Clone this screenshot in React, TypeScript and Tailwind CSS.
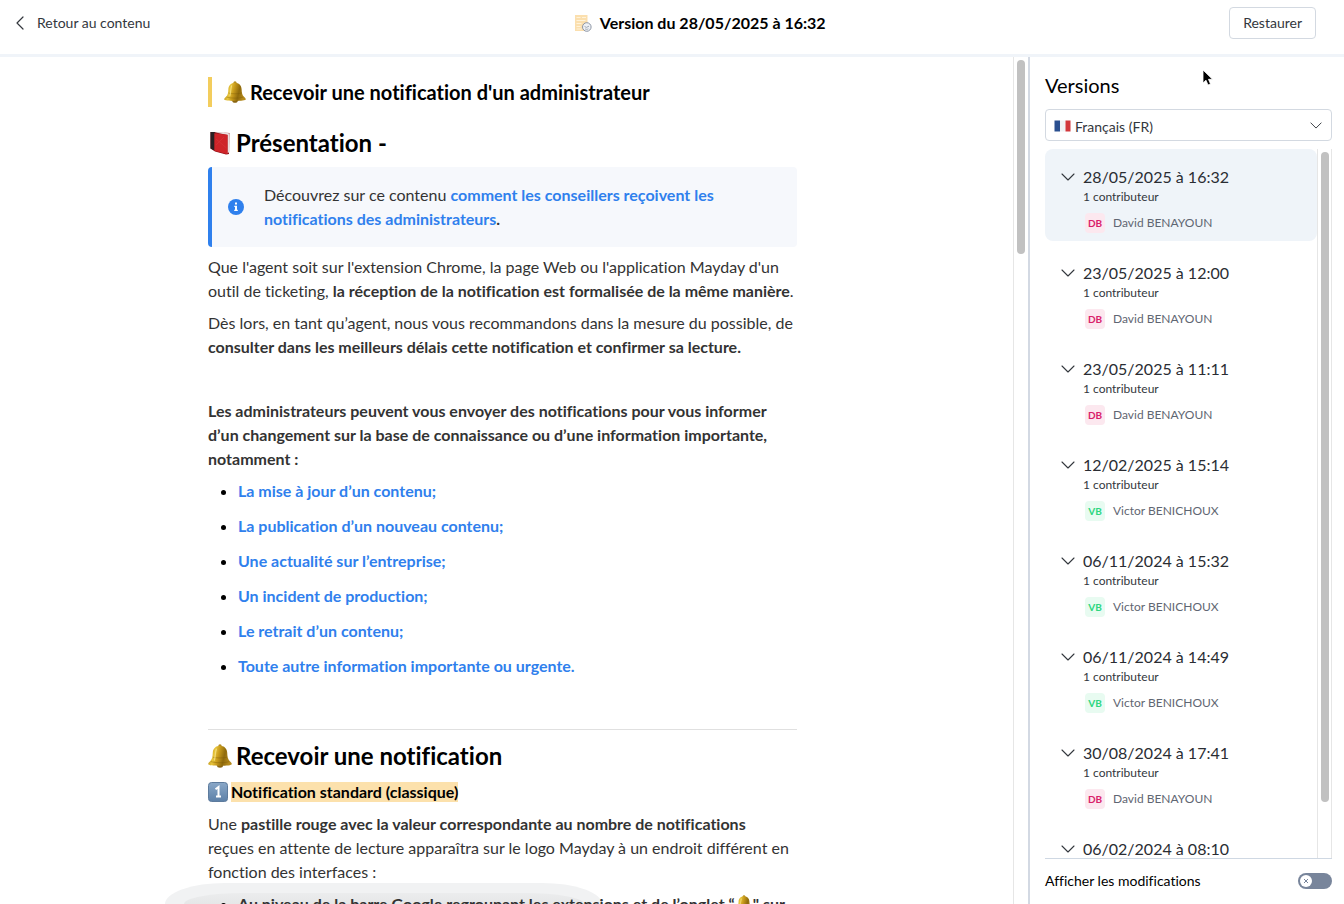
import { useState } from "react";

type Author = { initials: string; name: string; badge: string };

const DAVID: Author = { initials: "DB", name: "David BENAYOUN", badge: "bg-[#fce8ef] text-[#d9216b]" };
const VICTOR: Author = { initials: "VB", name: "Victor BENICHOUX", badge: "bg-[#e8fbf1] text-[#2ed680]" };

const versions = [
  { date: "28/05/2025 à 16:32", author: DAVID },
  { date: "23/05/2025 à 12:00", author: DAVID },
  { date: "23/05/2025 à 11:11", author: DAVID },
  { date: "12/02/2025 à 15:14", author: VICTOR },
  { date: "06/11/2024 à 15:32", author: VICTOR },
  { date: "06/11/2024 à 14:49", author: VICTOR },
  { date: "30/08/2024 à 17:41", author: DAVID },
  { date: "06/02/2024 à 08:10", author: DAVID },
];

const topics = [
  "La mise à jour d’un contenu;",
  "La publication d’un nouveau contenu;",
  "Une actualité sur l’entreprise;",
  "Un incident de production;",
  "Le retrait d’un contenu;",
  "Toute autre information importante ou urgente.",
];

function Bell({ className }: { className: string }) {
  return (
    <svg className={className} viewBox="0 0 24 24" aria-hidden="true">
      <defs>
        <linearGradient id="bell" x1="0" x2="1" y1="0" y2="0.2">
          <stop offset="0" stopColor="#a57a0c" />
          <stop offset="0.32" stopColor="#e8c53c" />
          <stop offset="0.5" stopColor="#c99c1c" />
          <stop offset="0.75" stopColor="#8f6a0c" />
          <stop offset="1" stopColor="#b58a1c" />
        </linearGradient>
      </defs>
      <circle cx="12" cy="2" r="1.7" fill="#b08a20" />
      <ellipse cx="12" cy="21.6" rx="3" ry="2.2" fill="#8a6614" />
      <path d="M12 1.800c-4.200 0-7 2.800-7.200 6.800-.2 4.400-.6 6.600-2.600 8.600C.9 18.500.2 19 .2 20c0 1.200 5.200 1.900 11.800 1.900s11.800-.7 11.800-1.900c0-1-.7-1.500-2-2.800-2-2-2.400-4.200-2.600-8.600-.2-4-3-6.800-7.200-6.800z" fill="url(#bell)" />
      <path d="M2.800 17.500c4 1.600 14.400 1.600 18.400 0M5 13.200c3 1 11 1 14 0" fill="none" stroke="#7c5a08" strokeWidth="0.700" opacity="0.600" />
      <path d="M8.300 5.200c-1.200 3.400-.8 7-1.900 11" fill="none" stroke="#f7e384" strokeWidth="1.300" strokeLinecap="round" opacity="0.800" />
    </svg>
  );
}

function Book() {
  return (
    <svg className="h-6 w-6 shrink-0" viewBox="0 0 24 24" aria-hidden="true">
      <path d="M2.500 1H7l14.500 1L21 23l-3 .5L7 20.500l-4.500-3z" fill="#8f1119" />
      <path d="M2.500 1h4l1 1.500V20l-5-2.500z" fill="#2a2023" />
      <path d="M6.500 1.200l9-.2 6 1.400v18.500l-2 1.300V4z" fill="#e9dede" />
      <path d="M6.300 2.200l13.200 1.500v19.500L6.300 19.800z" fill="#cf2429" />
      <path d="M8 8l10.500 9M8 14l8-8" stroke="#e0484b" strokeWidth="0.600" opacity="0.500" />
    </svg>
  );
}

function KeycapOne() {
  return (
    <svg className="h-5 w-5 shrink-0" viewBox="0 0 20 20" aria-hidden="true">
      <defs>
        <linearGradient id="keycap" x1="0" x2="0" y1="0" y2="1">
          <stop offset="0" stopColor="#8aa8c8" />
          <stop offset="1" stopColor="#5c80a8" />
        </linearGradient>
      </defs>
      <rect x="0.500" y="0.500" width="19" height="19" rx="3" fill="url(#keycap)" stroke="#5d7b9d" />
      <path d="M7.500 7.200L10.500 5v9.500M8 14.500h5" fill="none" stroke="#fff" strokeWidth="2" />
    </svg>
  );
}

function Chevron({ className }: { className: string }) {
  return (
    <svg className={className} viewBox="0 0 14 8" fill="none" stroke="#33373d" strokeWidth="1.100" strokeLinecap="round" strokeLinejoin="round" aria-hidden="true">
      <path d="M1 1l6 6 6-6" />
    </svg>
  );
}

function DocumentIcon() {
  return (
    <svg className="h-[18px] w-[18px]" viewBox="0 0 18 18" aria-hidden="true">
      <path d="M1 1h12.500v16H1z" fill="#fbdfae" />
      <path d="M2.500 3.500h4M8 3.500h4M2.500 6.500h9M2.500 9.500h5M2.500 12.500h4M2.500 15h5" stroke="#fff3da" />
      <circle cx="12.800" cy="13" r="4.300" fill="#eef1f5" stroke="#8d96a5" />
      <path d="M10.500 12.400l1.800 1 2.700-1.200M11 14.800c1 .7 2.400.7 3.400 0" fill="none" stroke="#8d96a5" strokeWidth="0.800" />
    </svg>
  );
}

function Header() {
  return (
    <header className="flex shrink-0 items-center justify-between border-b-[3px] border-[#f0f4f9] pt-[7px] pr-7 pb-[15px] pl-4">
      <button type="button" className="flex items-center gap-3 pr-5 text-sm text-[#33373d]">
        <svg className="h-[14px] w-[9px]" viewBox="0 0 9 14" fill="none" stroke="#33373d" strokeWidth="1.200" strokeLinecap="round" strokeLinejoin="round" aria-hidden="true">
          <path d="M7 1L1 7l6 6" />
        </svg>
        Retour au contenu
      </button>
      <h1 className="flex items-center gap-2 text-base font-bold text-black">
        <DocumentIcon />
        Version du 28/05/2025 à 16:32
      </h1>
      <button type="button" className="h-8 rounded border border-[#d3d9e1] px-[13px] text-sm text-[#33373d]">
        Restaurer
      </button>
    </header>
  );
}

function Article() {
  return (
    <article className="mx-auto w-full max-w-[589px] pt-5 text-base leading-6 text-[#333]">
      <h2 className="flex items-center gap-1 border-l-4 border-[#f3cd5d] pl-3 text-xl leading-[30px] font-bold text-black">
        <Bell className="h-[22px] w-[22px] shrink-0" />
        Recevoir une notification d'un administrateur
      </h2>

      <h2 className="mt-[18px] flex items-center gap-1 text-2xl leading-9 font-bold text-black">
        <Book />
        Présentation -
      </h2>

      <div className="mt-[6px] flex items-center gap-5 rounded-sm border-l-4 border-[#2f80ed] bg-[#f6f8fc] py-4 pr-12 pl-4">
        <svg className="h-4 w-4 shrink-0" viewBox="0 0 16 16" aria-hidden="true">
          <circle cx="8" cy="8" r="8" fill="#2f80ed" />
          <path d="M7 3.500h2v2H7zM6.300 6.800H9v4h.8V12H6.200v-1.200H7V8h-.7z" fill="#fff" />
        </svg>
        <p>
          Découvrez sur ce contenu{" "}
          <a href="#conseillers" className="font-bold text-[#2f80ed]">
            comment les conseillers reçoivent les notifications des administrateurs
          </a>
          <strong>.</strong>
        </p>
      </div>

      <p className="mt-2">
        Que l'agent soit sur l'extension Chrome, la page Web ou l'application Mayday d'un outil de ticketing,{" "}
        <strong>la réception de la notification est formalisée de la même manière</strong>.
      </p>
      <p className="mt-2">
        Dès lors, en tant qu’agent, nous vous recommandons dans la mesure du possible, de{" "}
        <strong>consulter dans les meilleurs délais cette notification et confirmer sa lecture.</strong>
      </p>
      <p className="mt-10 font-bold">
        Les administrateurs peuvent vous envoyer des notifications pour vous informer d’un changement sur la base de
        connaissance ou d’une information importante, notamment :
      </p>

      <ul className="mt-2 list-disc space-y-[11px] pl-[30px] marker:text-black">
        {topics.map((topic) => (
          <li key={topic}>
            <a href="#topic" className="font-bold text-[#2f80ed]">{topic}</a>
          </li>
        ))}
      </ul>

      <hr className="mt-[51px] border-[#e0e0e0]" />

      <h2 className="mt-2 flex items-center gap-1 text-2xl leading-9 font-bold text-black">
        <Bell className="h-6 w-6 shrink-0" />
        Recevoir une notification
      </h2>
      <h3 className="mt-2 flex items-center gap-[3px] font-bold text-black">
        <KeycapOne />
        <mark className="bg-[#fce1ac] leading-5 text-black">Notification standard (classique)</mark>
      </h3>
      <p className="mt-[10px]">
        Une <strong>pastille rouge avec la valeur correspondante au nombre de notifications</strong>
        <br />
        reçues en attente de lecture apparaîtra sur le logo Mayday à un endroit différent en fonction des interfaces :
      </p>
      <ul className="mt-2 list-disc pl-[30px] font-bold marker:text-black">
        <li>
          Au niveau de la barre Google regroupant les extensions et de l’onglet “
          <Bell className="inline h-[18px] w-[18px] align-text-bottom" />" sur
        </li>
      </ul>
    </article>
  );
}

function LanguageSelect() {
  return (
    <div className="relative mt-[9px]">
      <select
        aria-label="Langue"
        className="h-8 w-full appearance-none rounded border border-[#d3d9e1] bg-white pt-[3px] pl-[29px] text-sm text-[#33373d]"
      >
        <option>Français (FR)</option>
      </select>
      <svg className="pointer-events-none absolute top-[11px] left-[9px] h-3 w-[17px]" viewBox="0 0 17 12" aria-hidden="true">
        <path d="M.5.500h5.500v11H.500z" fill="#2a4f8f" />
        <path d="M6 .5h5.500v11H6z" fill="#f1f2f5" />
        <path d="M11.500.500h5v11h-5z" fill="#d2373c" />
      </svg>
      <Chevron className="pointer-events-none absolute top-[13px] right-[10px] h-[7px] w-3" />
    </div>
  );
}

function Sidebar() {
  const [selected, setSelected] = useState(0);
  const [showChanges, setShowChanges] = useState(false);

  return (
    <aside className="flex w-[316px] shrink-0 flex-col border-l-2 border-[#d3d9e3] pr-3 pl-[15px]">
      <h2 className="mt-[13px] text-xl leading-[30px] text-black">Versions</h2>
      <LanguageSelect />

      <div className="mt-2 flex min-h-0 flex-1 border-b border-[#cfd8e3]">
        <ul className="flex-1 space-y-1 overflow-hidden">
          {versions.map((version, index) => (
            <li key={version.date} className={`rounded-lg pt-4 pb-2 pl-4 ${index === selected ? "bg-[#eff4f9]" : ""}`}>
              <button type="button" onClick={() => setSelected(index)} className="flex items-center gap-2 text-base leading-6 text-[#2a2d33]">
                <Chevron className="h-2 w-[14px]" />
                {version.date}
              </button>
              <p className="pl-[22px] text-xs leading-4 text-[#33373d]">1 contributeur</p>
              <div className="mt-2 flex items-center gap-2 pl-6">
                <span className={`flex h-5 w-5 items-center justify-center rounded text-[10px] font-bold ${version.author.badge}`}>
                  {version.author.initials}
                </span>
                <span className="text-xs text-[#5f6672]">{version.author.name}</span>
              </div>
            </li>
          ))}
        </ul>
        <div className="flex w-[15px] justify-center border-x border-[#e6e6e6] pt-[3px]" aria-hidden="true">
          <div className="h-[92%] w-2 rounded-full bg-[#c1c1c1]" />
        </div>
      </div>

      <label className="flex h-[45px] items-center justify-between pb-[2px] text-sm text-black">
        Afficher les modifications
        <span className="relative flex h-4 w-[34px]">
          <input
            type="checkbox"
            role="switch"
            checked={showChanges}
            onChange={(e) => setShowChanges(e.target.checked)}
            className="h-4 w-[34px] appearance-none rounded-full bg-[#78859b] checked:bg-[#2f80ed]"
          />
          <svg className={`pointer-events-none absolute top-[2px] h-3 w-3 ${showChanges ? "right-[2px]" : "left-[2px]"}`} viewBox="0 0 12 12" aria-hidden="true">
            <circle cx="6" cy="6" r="6" fill="#fff" />
            <path d="M4 4l4 4M8 4L4 8" stroke="#78859b" />
          </svg>
        </span>
      </label>
    </aside>
  );
}

export default function App() {
  return (
    <div className="relative isolate flex h-screen flex-col overflow-hidden bg-white font-['Lato',sans-serif] [font-variant-ligatures:none]">
      <Header />
      <div className="flex min-h-0 flex-1">
        <main className="min-w-0 flex-1 overflow-hidden pr-2">
          <Article />
        </main>
        <div className="flex w-[15px] shrink-0 justify-center border-l border-[#e6e6e6] pt-[3px]" aria-hidden="true">
          <div className="h-[194px] w-2 rounded-full bg-[#c1c1c1]" />
        </div>
        <Sidebar />
      </div>

      {/* soft shade rising from the bottom edge, under the text */}
      <div className="absolute bottom-0 left-[165px] -z-10 h-[21px] w-[437px] overflow-hidden rounded-t-[60px_21px] bg-[#f1f2f3] pt-[10px]" aria-hidden="true">
        <div className="mx-auto h-5 w-[400px] rounded-t-[60px_11px] bg-linear-to-b from-[#ebeced] to-[#e2e3e3]" />
      </div>

      <svg className="pointer-events-none absolute top-[69px] left-[1202px] h-[18px] w-3" viewBox="0 0 12 18" aria-hidden="true">
        <path d="M1 1v13l3-2.800 2 4.800 2.500-1-2-4.700h4z" fill="#000" stroke="#fff" strokeWidth="0.800" />
      </svg>
    </div>
  );
}
